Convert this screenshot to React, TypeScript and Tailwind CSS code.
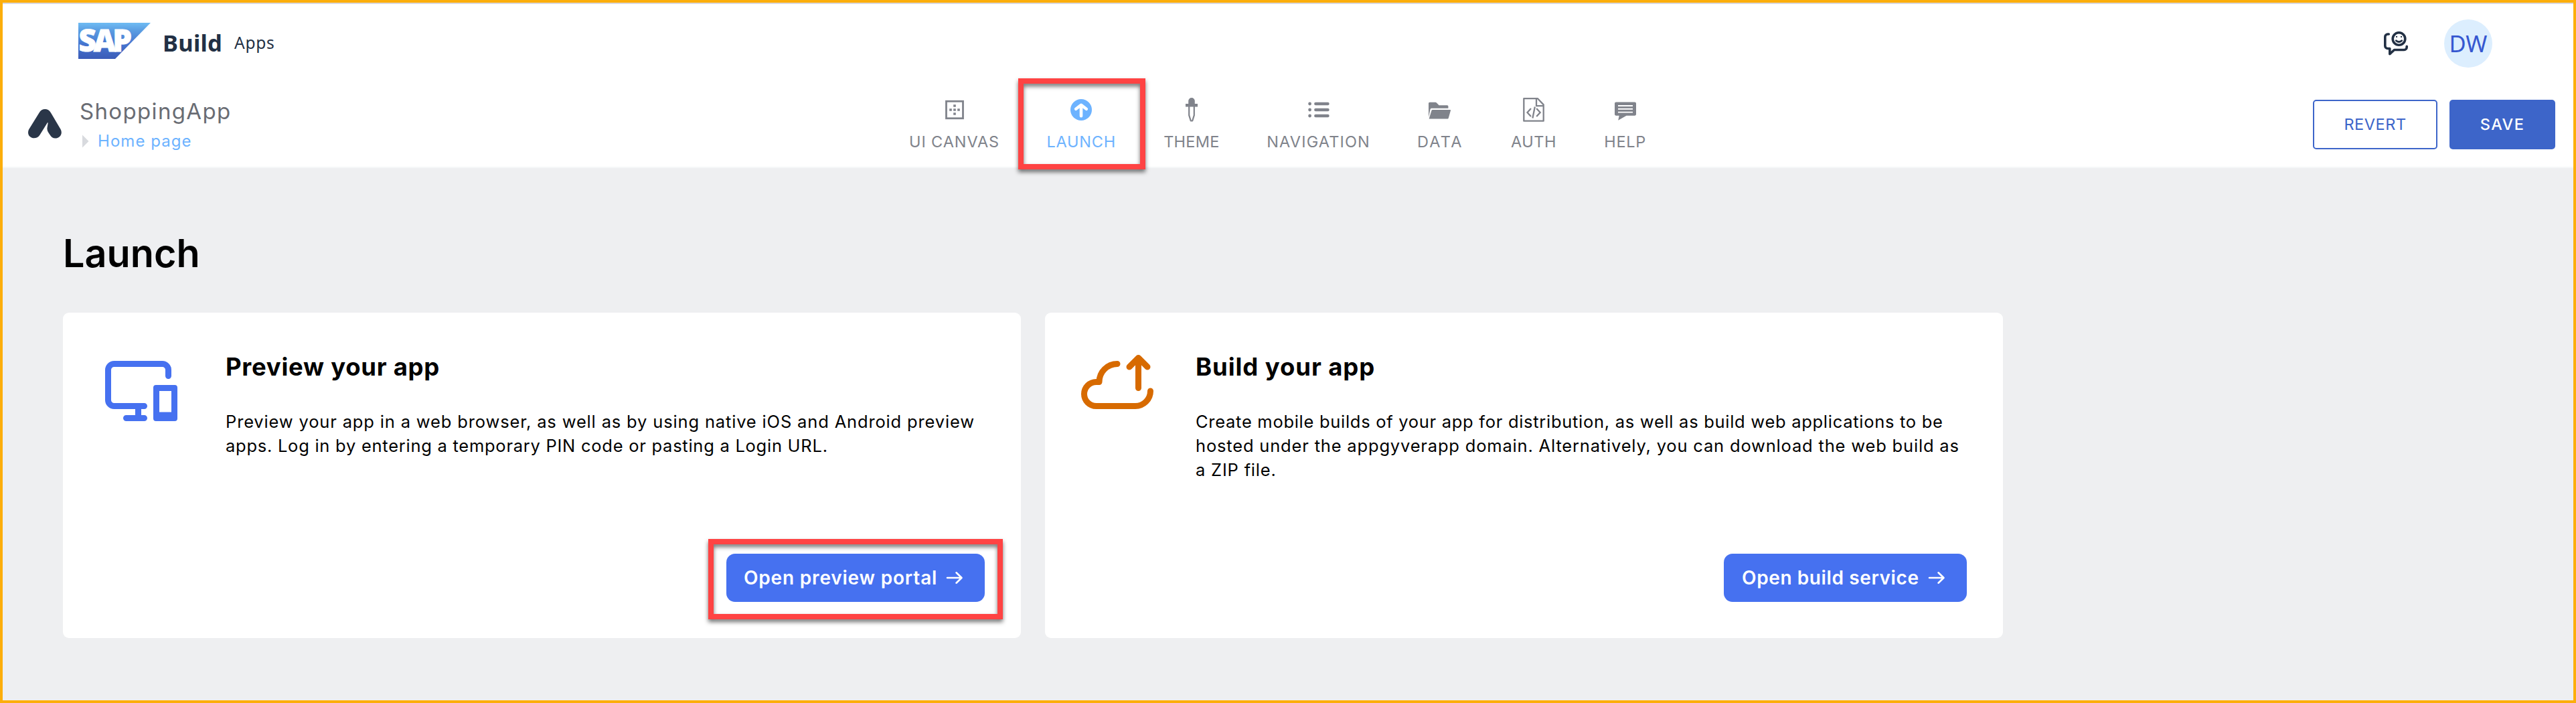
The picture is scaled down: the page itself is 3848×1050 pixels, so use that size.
import React from "react";

type NavItem = { label: string; width: string; spacing: string; active?: boolean; icon: React.ReactNode };

const NAV: NavItem[] = [
  {
    label: "UI CANVAS", width: "w-[131px]", spacing: "tracking-[0.89px]",
    icon: (
      <>
        <rect x="5.5" y="5.25" width="25" height="25.5" fill="none" stroke="currentColor" strokeWidth="2.8" />
        <path d="M16.2 10.2h3.6v3.6h-3.6zM16.2 16.2h3.6v3.6h-3.6zM16.2 22.2h3.6v3.6h-3.6zM10.2 16.2h3.6v3.6h-3.6zM22.2 16.2h3.6v3.6h-3.6z" />
      </>
    ),
  },
  {
    label: "LAUNCH", width: "w-[100px]", spacing: "tracking-[0.76px]", active: true,
    icon: (
      <>
        <circle cx="18" cy="18" r="16" />
        <path d="M10.2 16.8 18 10.8l7.8 6M18 11.5V27.2" fill="none" stroke="#fff" strokeWidth="4.6" strokeLinecap="round" strokeLinejoin="round" />
      </>
    ),
  },
  {
    label: "THEME", width: "w-[81px]", spacing: "tracking-[0.25px]",
    icon: (
      <>
        <path d="M13.2 9V4.8a4.8 4.8 0 0 1 9.6 0V9H27v4.5H9V9z" />
        <path d="M14.2 13v13.2l2.6 8.3h2.4l2.6-8.3V13" fill="none" stroke="currentColor" strokeWidth="2.2" strokeLinejoin="round" />
      </>
    ),
  },
  {
    label: "NAVIGATION", width: "w-[150px]", spacing: "tracking-[1.14px]",
    icon: (
      <>
        <circle cx="4.6" cy="9" r="2.4" /><circle cx="4.6" cy="18" r="2.4" /><circle cx="4.6" cy="27" r="2.4" />
        <path d="M13.4 9h18M13.4 18h18M13.4 27h18" fill="none" stroke="currentColor" strokeWidth="4.6" strokeLinecap="round" />
      </>
    ),
  },
  {
    label: "DATA", width: "w-[65px]", spacing: "tracking-[2.25px]",
    icon: (
      <>
        <path d="M1 29V8.6C1 7.5 1.7 6.8 2.8 6.8h8.4c.8 0 1.4.3 1.9.9l3.5 3.6h12.2c1 0 1.6.7 1.6 1.7v2.7H5.5c-1 0-1.7.6-2 1.6z" />
        <path d="M1.6 31.5 5.6 18.8c.2-.6.6-.9 1.2-.9h26.1c.8 0 1.2.5 1 1.3L30.7 30.5c-.2.7-.6 1-1.2 1z" />
      </>
    ),
  },
  {
    label: "AUTH", width: "w-[66px]", spacing: "tracking-[0.53px]",
    icon: (
      <g fill="none" stroke="currentColor" strokeWidth="2.3" strokeLinejoin="round">
        <path d="M3.3 1.2H24l8.7 9.2v24.3H3.3zM22 1.2v11h10.7" />
        <path d="m14 16-5.5 6 5.5 6M22.2 16l5.5 6-5.5 6M19.8 13.5l-3.4 17" strokeLinejoin="miter" />
      </g>
    ),
  },
  {
    label: "HELP", width: "w-[59px]", spacing: "tracking-[0.71px]",
    icon: (
      <>
        <path d="M4.2 6.6h27.6c1.4 0 2.2.8 2.2 2.2v15.7c0 1.4-.8 2.2-2.2 2.2H19.5L7.2 33.7l1.5-7H4.2c-1.4 0-2.2-.8-2.2-2.2V8.8c0-1.4.8-2.2 2.2-2.2z" />
        <path d="M7 12h22M7 16.8h22M7 21.6h22" stroke="#fff" strokeWidth="1.9" />
      </>
    ),
  },
];

function SapLogo() {
  return (
    <svg width="108" height="54" viewBox="0 0 108 54" className="-mt-2 shrink-0 overflow-visible">
      <defs>
        <linearGradient id="sap" x1="0" y1="0" x2="0" y2="1">
          <stop offset="0" stopColor="#6fbcf3" />
          <stop offset="0.2" stopColor="#5c9fe3" />
          <stop offset="0.6" stopColor="#4574cf" />
          <stop offset="1" stopColor="#3b5cb8" />
        </linearGradient>
      </defs>
      <path d="M0 0h108L55 54H0z" fill="url(#sap)" />
      <text x="0.5" y="43" fill="#fff" stroke="#fff" strokeWidth="1" fontFamily="Open Sans" fontWeight="800" fontSize="45.5" dx="0 -4 -4.5">SAP</text>
    </svg>
  );
}

function FeedbackIcon() {
  return (
    <svg width="36" height="36" viewBox="0 0 36 36" fill="none" stroke="#223044" strokeWidth="3.6" strokeLinecap="round" strokeLinejoin="round">
      <path d="M7.3 4H5.8a4 4 0 0 0-4 4v13.5a4 4 0 0 0 4 4H8.8V33.8L15.5 27.5H30.2a4 4 0 0 0 4-4V22.3" />
      <circle cx="22.5" cy="11" r="9.3" />
      <path d="M18.3 13.7q4.2 3.6 8.4 0" strokeWidth="2.8" />
      <path d="M19 7.9h.1M26 7.9h.1" strokeWidth="2.2" />
    </svg>
  );
}

function AppMark() {
  return (
    <svg width="50" height="44" viewBox="42 163 50 44" className="mt-[17px]">
      <path d="M58.5 168.5C62.5 161.3 72 161.3 76 168.5L90.5 193c4 8-2 13.6-8 13.6-3.5 0-6-2-7.5-4.6-2.5-4-5-6.5-4.5-11l1.2-7.5-.7-.5L59.5 201.5C53.5 211 38 205.5 43 193.5z" fill="#2a3648" />
    </svg>
  );
}

function Arrow() {
  return (
    <svg width="26" height="20" viewBox="0 0 26 20" fill="none" stroke="#fff" strokeWidth="2.6" strokeLinecap="round" strokeLinejoin="round">
      <path d="M2 10h21M15.5 2.3 23.5 10l-8 7.7" />
    </svg>
  );
}

function PreviewIcon() {
  return (
    <svg width="108" height="108" viewBox="0 0 108 108" fill="none" stroke="#4671f0" strokeWidth="9" strokeLinecap="round">
      <path d="M94.5 31.5V22.5a9 9 0 0 0-9-9h-72a9 9 0 0 0-9 9v45a9 9 0 0 0 9 9H58.5" />
      <path d="M49.5 77v17M31.5 94.5h27" />
      <path d="M76 45h28q4 0 4 4v46q0 4-4 4H76q-4 0-4-4V49q0-4 4-4zM81 54v31.5h18V54z" fill="#4671f0" fillRule="evenodd" stroke="none" />
    </svg>
  );
}

function BuildIcon() {
  return (
    <svg width="108" height="108" viewBox="0 0 108 108" fill="none" stroke="#d76a00" strokeWidth="9" strokeLinecap="round" strokeLinejoin="round">
      <path d="M54 13.5a27 27 0 0 0-27 27h-4.5a18 18 0 0 0 0 36h58.5a22.5 22.5 0 0 0 22.5-22.5" />
      <path d="M72 18 85.5 4.5 99 18M85.5 6v43.5" />
    </svg>
  );
}

type CardProps = {
  pad: string;
  gap: string;
  icon: React.ReactNode;
  title: React.ReactNode;
  lines: React.ReactNode;
  action: React.ReactNode;
};

function Card({ pad, gap, icon, title, lines, action }: CardProps) {
  return (
    <section className={`flex h-[486px] w-[1431px] shrink-0 flex-col rounded-[9px] bg-white pt-[59px] pr-[54px] pb-[54px] ${pad}`}>
      <div className={`flex ${gap}`}>
        <div className="mt-[4px] w-[108px] shrink-0">{icon}</div>
        <div className="whitespace-nowrap text-black">
          <h2 className="text-[36.5px] leading-[44px] font-bold">{title}</h2>
          <p className="mt-[42px] flex flex-col text-[25.5px] leading-[36px]">{lines}</p>
        </div>
      </div>
      <div className="mt-auto flex justify-end">{action}</div>
    </section>
  );
}

export default function App() {
  return (
    <div className="flex h-[1050px] w-[3848px] flex-col overflow-hidden border-4 border-[#fcae0b] bg-[#eeeff1] font-['Inter',sans-serif]">
      <header className="h-[247px] shrink-0 border-t-2 border-b-2 border-t-[#d9d9de] border-b-[#f6f7f8] bg-white">
        <div className="flex h-[118px] items-center pr-[121px] pl-[113px]">
          <SapLogo />
          <span className="-mt-[3px] ml-[18px] font-['Noto_Sans',sans-serif] text-[34.5px] leading-[40px] font-bold tracking-[0.26px] text-[#223044]">Build</span>
          <span className="-mt-[2px] ml-[18px] font-['Noto_Sans',sans-serif] text-[24.5px] leading-[32px] tracking-[0.74px] text-[#223044]">Apps</span>
          <div className="ml-auto flex items-center gap-[54px]">
            <FeedbackIcon />
            <div className="flex size-[72px] items-center justify-center rounded-full bg-[#dceefe] font-['Noto_Sans',sans-serif] text-[34.5px] leading-[40px] text-[#3557d0]">DW</div>
          </div>
        </div>
        <div className="flex h-[125px]">
          <div className="flex w-[1356px] shrink-0 pt-[22px] pl-[38px]">
            <AppMark />
            <div className="ml-[26px]">
              <div className="ml-[1px] text-[33px] leading-[40px] tracking-[1.34px] text-[#696c73]">ShoppingApp</div>
              <div className="mt-[9px] flex h-[32px] items-center">
                <svg width="10" height="20" viewBox="0 0 10 20" className="ml-[5px]"><path d="M0 0.5 9.5 10 0 19.5z" fill="#d8dade" /></svg>
                <span className="ml-[13px] text-[24px] leading-[32px] tracking-[1.05px] text-[#6db3ff]">Home page</span>
              </div>
            </div>
          </div>
          <nav className="flex gap-[74.2px] pt-[22px]">
            {NAV.map((n) => (
              <div key={n.label} className={`relative flex flex-col items-center ${n.width} ${n.active ? "text-[#6db3ff]" : "text-[#80838b]"}`}>
                <svg width="36" height="36" viewBox="0 0 36 36" fill="currentColor">{n.icon}</svg>
                <span className={`mt-4 text-[23.5px] leading-[28px] whitespace-nowrap ${n.spacing}`}>{n.label}</span>
                {n.active && (
                  <div className="absolute -top-[29px] -left-[44px] z-10 h-[136px] w-[190px] border-8 border-[#ff4343] drop-shadow-[0_4px_3px_rgba(0,0,0,0.55)]" />
                )}
              </div>
            ))}
          </nav>
          <div className="ml-auto flex gap-[18px] pt-[25px] pr-[27px] text-[23.5px] leading-[28px]">
            <button className="h-[74px] w-[186px] rounded-[5px] border-2 border-[#3d65c9] tracking-[0.56px] text-[#3d65c9]">REVERT</button>
            <button className="h-[74px] w-[158px] rounded-[5px] bg-[#3d65c9] font-medium tracking-[1.4px] text-white">SAVE</button>
          </div>
        </div>
      </header>
      <main className="pt-[92px] pl-[90px]">
        <h1 className="text-[57.5px] leading-[70px] font-semibold text-black">Launch</h1>
        <div className="mt-[54px] flex gap-[36px]">
          <Card
            pad="pl-[63px]"
            gap="gap-[72px]"
            icon={<PreviewIcon />}
            title={<span className="tracking-[0.72px]">Preview your app</span>}
            lines={
              <>
                <span className="tracking-[0.84px]">Preview your app in a web browser, as well as by using native iOS and Android preview</span>
                <span className="tracking-[0.74px]">apps. Log in by entering a temporary PIN code or pasting a Login URL.</span>
              </>
            }
            action={
              <div className="relative">
                <button className="flex h-[72px] w-[386px] items-center rounded-[13px] bg-[#4671f0] pl-[26px] text-[28px] leading-[36px] font-semibold text-white">
                  <span className="tracking-[0.81px]">Open preview portal</span>
                  <span className="mr-[32px] ml-auto"><Arrow /></span>
                </button>
                <div className="absolute -top-[22px] -left-[27px] h-[120px] w-[440px] border-8 border-[#ff4343] drop-shadow-[0_4px_3px_rgba(0,0,0,0.55)]" />
              </div>
            }
          />
          <Card
            pad="pl-[54px]"
            gap="gap-[63px]"
            icon={<BuildIcon />}
            title={<span className="tracking-[0.91px]">Build your app</span>}
            lines={
              <>
                <span className="tracking-[0.71px]">Create mobile builds of your app for distribution, as well as build web applications to be</span>
                <span className="tracking-[0.82px]">hosted under the appgyverapp domain. Alternatively, you can download the web build as</span>
                <span className="tracking-[0.8px]">a ZIP file.</span>
              </>
            }
            action={
              <button className="flex h-[72px] w-[363px] items-center rounded-[13px] bg-[#4671f0] pl-[27px] text-[28px] leading-[36px] font-semibold text-white">
                <span className="tracking-[0.61px]">Open build service</span>
                <span className="mr-[32px] ml-auto"><Arrow /></span>
              </button>
            }
          />
        </div>
      </main>
    </div>
  );
}
